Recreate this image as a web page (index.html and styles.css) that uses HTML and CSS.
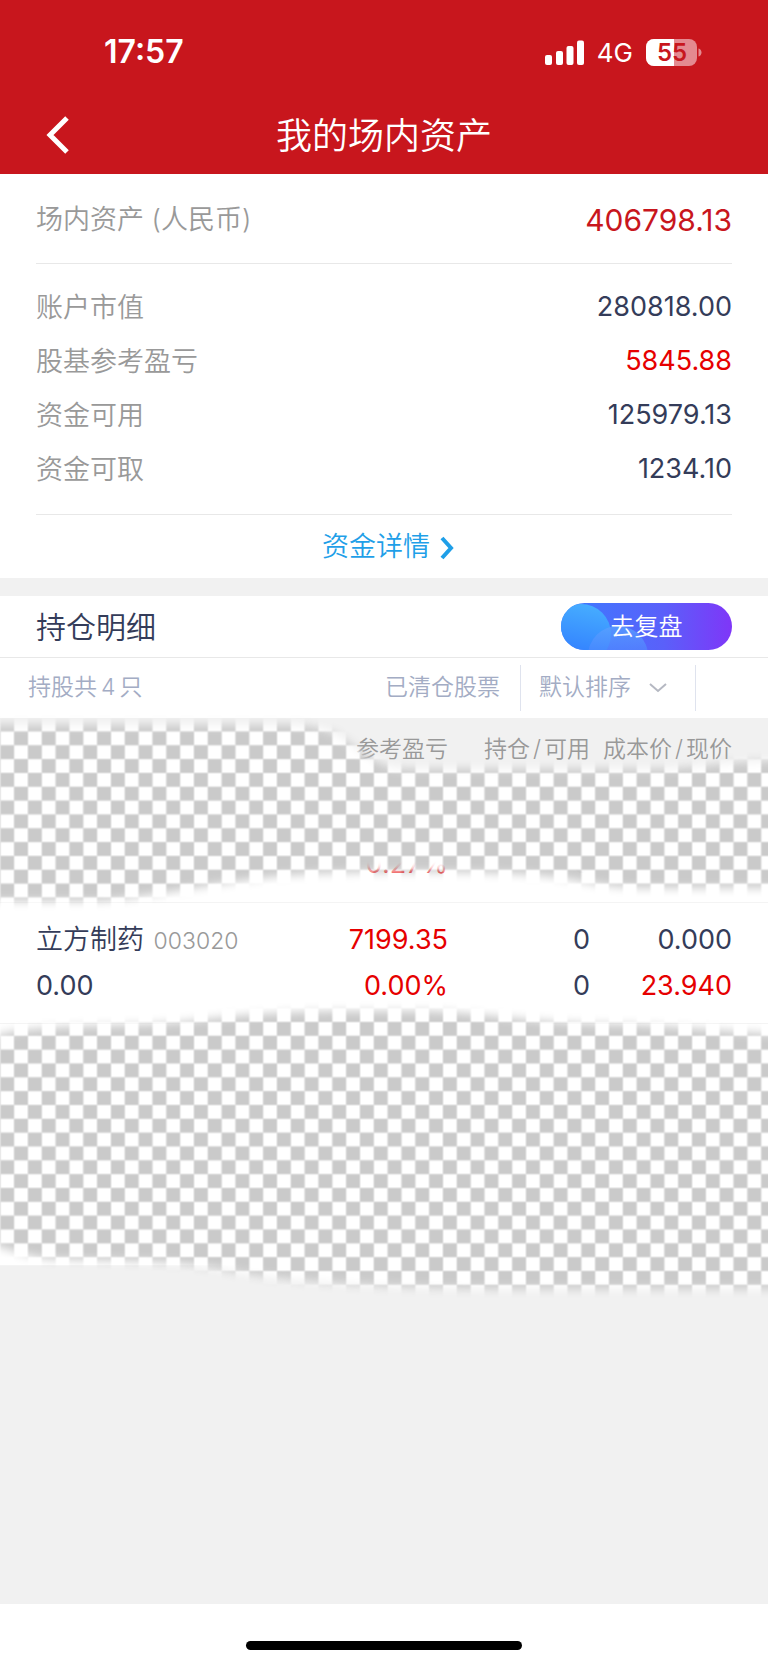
FILE: index.html
```html
<!DOCTYPE html>
<html lang="zh-CN">
<head>
  <meta charset="UTF-8">
  <meta name="viewport" content="width=device-width, initial-scale=1.0">
  <title>我的场内资产</title>
  <link rel="stylesheet" href="styles.css">
</head>
<body>
  <header class="header">
    <div class="status-bar">
      <span class="time">17:57</span>
      <div class="status-icons">
        <svg class="signal" width="39" height="26" viewBox="0 0 39 26" fill="#fff" aria-hidden="true">
          <rect x="0" y="15" width="7" height="10" rx="2"/>
          <rect x="11" y="11" width="7" height="14" rx="2"/>
          <rect x="21.500" y="6" width="7" height="19" rx="2"/>
          <rect x="32" y="0.500" width="7" height="24.500" rx="2"/>
        </svg>
        <span class="network">4G</span>
        <svg class="battery" width="56" height="27" viewBox="0 0 56 27" aria-hidden="true">
          <defs>
            <clipPath id="battery-shape"><rect width="51" height="27" rx="8"/></clipPath>
          </defs>
          <g clip-path="url(#battery-shape)">
            <rect width="51" height="27" fill="#e48a90"/>
            <rect width="28" height="27" fill="#fff"/>
          </g>
          <path d="M52.500 9.500c4 1 4 7 0 8z" fill="#e48a90"/>
          <text class="battery-text" x="26" y="22" text-anchor="middle">55</text>
        </svg>
      </div>
    </div>
    <div class="nav-bar">
      <button class="back" type="button" aria-label="返回">
        <svg width="24" height="38" viewBox="0 0 24 38" fill="none" stroke="#fff" stroke-width="5" aria-hidden="true">
          <path d="M21 2 4 19l17 17"/>
        </svg>
      </button>
      <h1>我的场内资产</h1>
    </div>
  </header>

  <main>
    <section class="assets">
      <dl class="total">
        <div class="row"><dt>场内资产 (人民币)</dt><dd class="brand">406798.13</dd></div>
      </dl>
      <dl class="details">
        <div class="row"><dt>账户市值</dt><dd>280818.00</dd></div>
        <div class="row"><dt>股基参考盈亏</dt><dd class="up">5845.88</dd></div>
        <div class="row"><dt>资金可用</dt><dd>125979.13</dd></div>
        <div class="row"><dt>资金可取</dt><dd>1234.10</dd></div>
      </dl>
      <a class="more" href="#">
        资金详情
        <svg width="14" height="24" viewBox="0 0 14 24" fill="none" stroke="#1f9fe8" stroke-width="4" aria-hidden="true">
          <path d="M2 2l9 10-9 10"/>
        </svg>
      </a>
    </section>

    <section class="positions">
      <div class="positions-head">
        <h2>持仓明细</h2>
        <button class="review" type="button">
          <svg class="review-bubbles" width="100" height="47" viewBox="0 0 100 47" aria-hidden="true">
            <defs>
              <linearGradient id="bubble-a" x1="0.6" y1="0" x2="0.4" y2="1">
                <stop offset="0" stop-color="#46adff"/>
                <stop offset="1" stop-color="#2f78ff"/>
              </linearGradient>
              <linearGradient id="bubble-b" x1="0" y1="0" x2="0" y2="1">
                <stop offset="0" stop-color="#5aa0ff" stop-opacity="0.8"/>
                <stop offset="0.8" stop-color="#4a78ff" stop-opacity="0.4"/>
              </linearGradient>
            </defs>
            <circle cx="20" cy="31" r="30" fill="url(#bubble-a)"/>
            <circle cx="57" cy="53" r="30" fill="url(#bubble-b)"/>
          </svg>
          <span>去复盘</span>
        </button>
      </div>

      <div class="filters">
        <span class="count">持股共<span class="number">4</span>只</span>
        <a class="closed" href="#">已清仓股票</a>
        <div class="sort">
          <select aria-label="排序方式">
            <option>默认排序</option>
          </select>
          <svg width="18" height="10" viewBox="0 0 18 10" fill="none" stroke="#b5b8c2" stroke-width="2" aria-hidden="true">
            <path d="M1 1l8 7 8-7"/>
          </svg>
        </div>
      </div>

      <div class="holdings">
        <table>
          <thead>
            <tr>
              <th class="col-name"></th>
              <th>参考盈亏</th>
              <th>持仓<span class="slash">/</span>可用</th>
              <th>成本价<span class="slash">/</span>现价</th>
            </tr>
          </thead>
          <tbody>
            <tr>
              <td></td>
              <td class="up"><span class="line"></span><span class="line">0.27%</span></td>
              <td><span class="line"></span><span class="line">0</span></td>
              <td></td>
            </tr>
            <tr>
              <td><span class="line name">立方制药 <small>003020</small></span><span class="line">0.00</span></td>
              <td class="up"><span class="line">7199.35</span><span class="line">0.00%</span></td>
              <td><span class="line">0</span><span class="line">0</span></td>
              <td><span class="line">0.000</span><span class="line up">23.940</span></td>
            </tr>
            <tr><td></td><td></td><td></td><td></td></tr>
            <tr><td></td><td></td><td></td><td></td></tr>
          </tbody>
        </table>

        <!-- erased areas: transparency checkerboard with soft edges -->
        <svg class="erased" viewBox="0 717 768 600" preserveAspectRatio="none" aria-hidden="true">
          <defs>
            <pattern id="checker" x="0.300" y="-2.800" width="27.670" height="27.670" patternUnits="userSpaceOnUse">
              <rect width="27.670" height="27.670" fill="#e2e2e2"/>
              <rect x="0.500" y="0.500" width="12.800" height="12.800" fill="#cacaca"/>
              <rect x="14.300" y="14.300" width="12.800" height="12.800" fill="#cacaca"/>
              <rect x="14.300" y="0.500" width="12.800" height="12.800" fill="#fff"/>
              <rect x="0.500" y="14.300" width="12.800" height="12.800" fill="#fff"/>
            </pattern>
            <filter id="soft" filterUnits="userSpaceOnUse" x="-40" y="690" width="850" height="640">
              <feGaussianBlur stdDeviation="5"/>
            </filter>
            <mask id="brush" maskUnits="userSpaceOnUse" x="0" y="700" width="768" height="620">
              <g fill="#fff" filter="url(#soft)">
                <path d="M-30 724H290C330 724 345 738 362 752C380 764 390 768 410 768H650C700 768 720 760 800 759V887H650C590 887 580 876 520 873C440 870 340 870 280 875C210 883 150 896 100 900H-30z"/>
                <path d="M-30 1042L10 1031C60 1023 140 1026 190 1020C250 1013 300 1010 350 1010H430C500 1014 540 1022 600 1023C680 1024 720 1031 800 1034V1288H500C400 1287 300 1283 230 1270C170 1257 100 1261 50 1258C20 1254 10 1248 -30 1236z"/>
              </g>
            </mask>
          </defs>
          <rect x="0" y="700" width="768" height="620" fill="url(#checker)" mask="url(#brush)"/>
        </svg>
      </div>
    </section>
  </main>

  <footer class="home">
    <div class="home-indicator"></div>
  </footer>
</body>
</html>
```

FILE: styles.css
```css
* {
  box-sizing: border-box;
}

body {
  margin: 0;
  min-height: 100vh;
  display: flex;
  flex-direction: column;
  background-color: #f1f1f1;
  color: #343c59;
  font-family: Inter, "Noto Sans CJK SC", sans-serif;
  font-size: 27px;
  font-weight: 350;
  line-height: 1.2;
}

h1, h2, dl, dd {
  margin: 0;
  font-weight: 350;
}

a {
  text-decoration: none;
}

button, select {
  font-family: inherit;
  font-weight: inherit;
  line-height: inherit;
  border: none;
  padding: 0;
  cursor: pointer;
}

svg {
  display: block;
}

.up {
  color: #e60000;
}

/* header */
.header {
  background-color: #c8161d;
  color: #fff;
}

.status-bar {
  height: 96px;
  padding: 9px 66px 0 104px;
  display: flex;
  align-items: center;
  justify-content: space-between;
}

.time {
  font-size: 32px;
  font-weight: 600;
}

.status-icons {
  display: flex;
  align-items: center;
  gap: 13px;
}

.network {
  font-size: 26px;
  font-weight: 400;
}

.battery-text {
  font-size: 24px;
  font-weight: 600;
  fill: #c8161d;
}

.nav-bar {
  height: 78px;
  padding: 0 46px;
  display: grid;
  grid-template-columns: 40px 1fr 40px;
  align-items: center;
}

.back {
  background: none;
}

h1 {
  padding-top: 4px;
  font-size: 36px;
  text-align: center;
}

/* asset summary */
.assets {
  background-color: #fff;
  padding: 0 36px;
}

.row {
  display: flex;
  align-items: center;
  justify-content: space-between;
  height: 54px;
}

dt {
  padding-top: 2px;
  color: #999;
}

dd {
  font-size: 27px;
  font-weight: 400;
}

.total .row {
  height: 89px;
  padding-top: 2px;
}

.total dd {
  font-size: 30px;
}

.brand {
  color: #c8161d;
}

.total {
  border-bottom: 1px solid #e8e8e8;
}

.details {
  padding: 16px 0 18px;
  border-bottom: 1px solid #e8e8e8;
}

.more {
  display: flex;
  align-items: center;
  justify-content: center;
  gap: 10px;
  height: 63px;
  padding: 2px 0 0 8px;
  color: #1f9fe8;
}

/* positions */
.positions {
  margin-top: 18px;
  background-color: #fff;
}

.positions-head {
  display: flex;
  align-items: center;
  justify-content: space-between;
  height: 62px;
  padding: 0 36px;
  border-bottom: 1px solid #e8e8e8;
}

h2 {
  font-size: 30px;
}

.review {
  position: relative;
  overflow: hidden;
  width: 171px;
  height: 47px;
  padding-top: 2px;
  border-radius: 24px;
  background: linear-gradient(90deg, #3a7cff, #5a60fa 60%, #7f36f8);
  color: #fff;
  font-size: 24px;
}

.review-bubbles {
  position: absolute;
  top: 0;
  left: 0;
}

.review span {
  position: relative;
}

.filters {
  display: flex;
  align-items: center;
  height: 60px;
  padding: 0 72px 0 28px;
  color: #a3acc4;
  font-size: 23px;
}

.count {
  flex: 1;
}

.number {
  margin: 0 4px;
}

.closed {
  color: inherit;
  padding-right: 20px;
}

.sort {
  display: flex;
  align-items: center;
  gap: 18px;
  height: 46px;
  padding: 0 28px 0 18px;
  border-left: 1px solid #dfe3ee;
  border-right: 1px solid #dfe3ee;
}

.sort select {
  appearance: none;
  background: none;
  color: inherit;
  font-size: 23px;
}

.holdings {
  position: relative;
}

table {
  width: 100%;
  table-layout: fixed;
  border-collapse: collapse;
}

th {
  width: 142px;
  height: 63px;
  padding: 0;
  background-color: #f1f1f1;
  color: #999;
  font-size: 23px;
  font-weight: 350;
  text-align: right;
  white-space: nowrap;
}

.slash {
  margin: 0 3px;
}

.col-name {
  width: auto;
}

th:last-child {
  width: 178px;
}

td {
  height: 121px;
  padding: 0;
  border-bottom: 1px solid #f4f4f4;
  font-weight: 400;
  text-align: right;
}

td:first-child {
  padding-left: 36px;
  text-align: left;
}

th:last-child, td:last-child {
  padding-right: 36px;
}

.line {
  display: block;
  height: 46px;
  line-height: 46px;
}

.name {
  font-weight: 350;
}

small {
  margin-left: 2px;
  color: #999;
  font-size: 23px;
}

.erased {
  position: absolute;
  top: 0;
  left: 0;
  width: 100%;
  height: 600px;
  overflow: visible;
  pointer-events: none;
}

/* home indicator */
.home {
  display: flex;
  justify-content: center;
  height: 61px;
  margin-top: auto;
  padding-top: 37px;
  background-color: #fff;
}

.home-indicator {
  width: 36%;
  height: 9px;
  border-radius: 5px;
  background-color: #000;
}
```
